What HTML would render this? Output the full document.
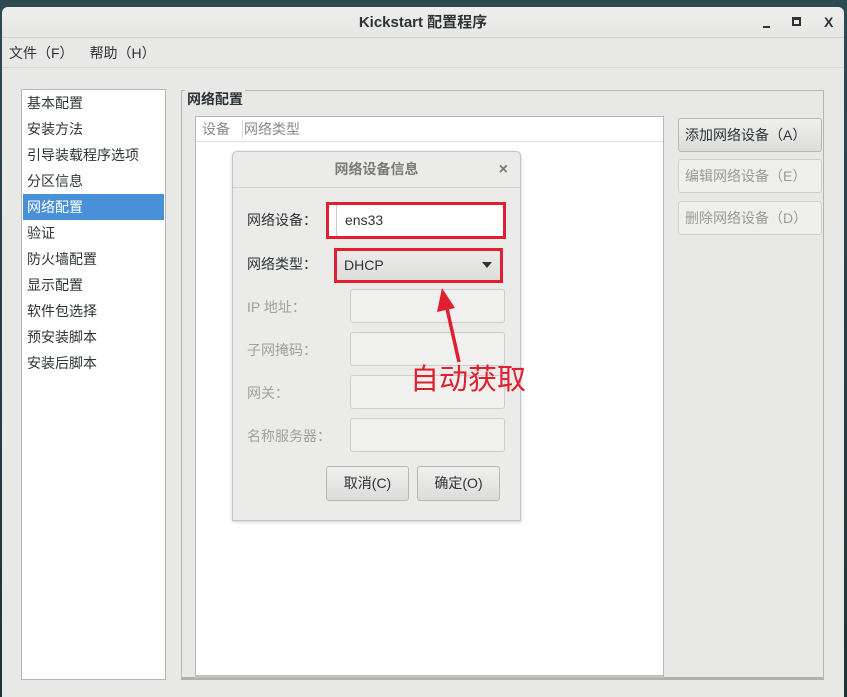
<!DOCTYPE html><html><head><meta charset="utf-8"><style>
*{box-sizing:border-box;margin:0;padding:0}
body{width:847px;height:697px;overflow:hidden;background:linear-gradient(#2d4a50,#1e3338);font-family:"Liberation Sans","Noto Sans CJK SC",sans-serif;font-size:14px;color:#2e3436;position:relative}
.a{position:absolute}
.win{left:2px;top:7px;width:842px;height:690px;background:#e8e8e7;border-radius:6px 6px 0 0}
.tb{left:0;top:0;width:842px;height:31px;border-bottom:1px solid #d0d0ce;background:linear-gradient(#eeeeec,#e6e6e4);border-radius:6px 6px 0 0;text-align:center;line-height:31px;font-weight:bold;font-size:15px}
.menu{left:0;top:31px;width:842px;height:30px;border-bottom:1px solid #d6d6d4;line-height:30px;font-size:14px}
.white{background:#fff;border:1px solid #b6b6b3}
.item{position:absolute;left:1px;width:141px;height:26px;line-height:26px;padding-left:4px}
.btn{border:1px solid #b8b8b5;border-radius:3px;background:linear-gradient(#f0f0ef,#dcdcda);text-align:left;padding-left:6px;line-height:30px;font-size:14px}
.dis{background:#efefed;color:#9a9a98;border-color:#cfcfcd}
.fld{background:#f0f0ef;border:1px solid #cdcdcb;border-radius:3px;width:155px;height:34px;left:350px}
.lbl{color:#a0a0a0;left:247px}
</style></head><body>
<div class="a win">
<div class="a tb">Kickstart 配置程序</div>
<div class="a menu"><span style="margin-left:7px">文件（F）</span><span style="margin-left:16px">帮助（H）</span></div>
</div>
<span class="a" style="left:763px;top:26px;width:7px;height:2px;background:#2e3436"></span>
<span class="a" style="left:792px;top:17px;width:9px;height:9px;border:2px solid #2e3436;border-top-width:3px"></span>
<span class="a" style="left:824px;top:13px;font-size:14px;font-weight:bold;line-height:18px">X</span>
<div class="a white" style="left:21px;top:89px;width:145px;height:591px">
<div class="item" style="top:0">基本配置</div><div class="item" style="top:26px">安装方法</div><div class="item" style="top:52px">引导装载程序选项</div><div class="item" style="top:78px">分区信息</div><div class="item" style="top:104px;background:#4a90d9;color:#fff">网络配置</div><div class="item" style="top:130px">验证</div><div class="item" style="top:156px">防火墙配置</div><div class="item" style="top:182px">显示配置</div><div class="item" style="top:208px">软件包选择</div><div class="item" style="top:234px">预安装脚本</div><div class="item" style="top:260px">安装后脚本</div>
</div>
<div class="a" style="left:181px;top:90px;width:643px;height:590px;border:1px solid #b6b6b3;border-bottom:3px solid #b0b0ad"></div>
<div class="a" style="left:185px;top:90px;background:#e8e8e7;font-weight:bold;padding:0 2px;line-height:18px">网络配置</div>
<div class="a white" style="left:195px;top:116px;width:469px;height:562px;border-bottom:3px solid #c0c0bd">
<div class="a" style="left:0;top:0;width:467px;height:25px;border-bottom:1px solid #e0e0de;color:#8a8a88;line-height:24px"><span style="margin-left:6px">设备</span><span class="a" style="left:46px;top:3px;height:18px;border-left:1px solid #ddd"></span><span style="margin-left:14px">网络类型</span></div>
</div>
<div class="a btn" style="left:678px;top:118px;width:144px;height:34px;line-height:32px">添加网络设备（A）</div>
<div class="a btn dis" style="left:678px;top:159px;width:144px;height:34px;line-height:32px">编辑网络设备（E）</div>
<div class="a btn dis" style="left:678px;top:201px;width:144px;height:34px;line-height:32px">删除网络设备（D）</div>

<div class="a" style="left:232px;top:151px;width:289px;height:370px;background:#ebebea;border:1px solid #c4c4c2;border-radius:5px 5px 0 0;box-shadow:0 1px 3px rgba(0,0,0,.2)">
<div class="a" style="left:0;top:0;width:287px;height:36px;border-bottom:1px solid #d4d4d2;text-align:center;line-height:35px;font-weight:bold;color:#7a7a78;font-size:14px">网络设备信息<span class="a" style="right:12px;top:0;font-size:16px">×</span></div>
</div>
<div class="a" style="left:247px;top:210px;line-height:20px">网络设备：</div>
<div class="a" style="left:326px;top:202px;width:180px;height:37px;border:3px solid #e02030;background:#fff"><div class="a" style="left:7px;top:0;height:31px;border-left:1px solid #ccc"></div><span class="a" style="left:16px;top:7px">ens33</span></div>
<div class="a" style="left:247px;top:254px;line-height:20px">网络类型：</div>
<div class="a" style="left:334px;top:248px;width:169px;height:35px;border:3px solid #e02030;background:linear-gradient(#ececeb,#dcdcda)"><span class="a" style="left:7px;top:6px">DHCP</span><span class="a" style="right:8px;top:11px;border:5px solid transparent;border-top:6px solid #2e3436"></span></div>
<div class="a fld" style="top:289px"></div><div class="a fld" style="top:332px"></div><div class="a fld" style="top:375px"></div><div class="a fld" style="top:418px"></div>
<div class="a lbl" style="top:297px">IP 地址：</div>
<div class="a lbl" style="top:340px">子网掩码：</div>
<div class="a lbl" style="top:383px">网关：</div>
<div class="a lbl" style="top:426px">名称服务器：</div>
<div class="a btn" style="left:326px;top:466px;width:83px;height:35px;text-align:center;padding:0;line-height:33px">取消(C)</div>
<div class="a btn" style="left:417px;top:466px;width:83px;height:35px;text-align:center;padding:0;line-height:33px">确定(O)</div>
<svg class="a" style="left:0;top:0" width="847" height="697"><line x1="459" y1="362" x2="446" y2="304" stroke="#e02030" stroke-width="3.5"/><polygon points="442,288 437,312 455,308" fill="#e02030"/></svg>
<div class="a" style="left:410px;top:362px;font-size:29px;color:#e02030;line-height:36px">自动获取</div>
</body></html>
